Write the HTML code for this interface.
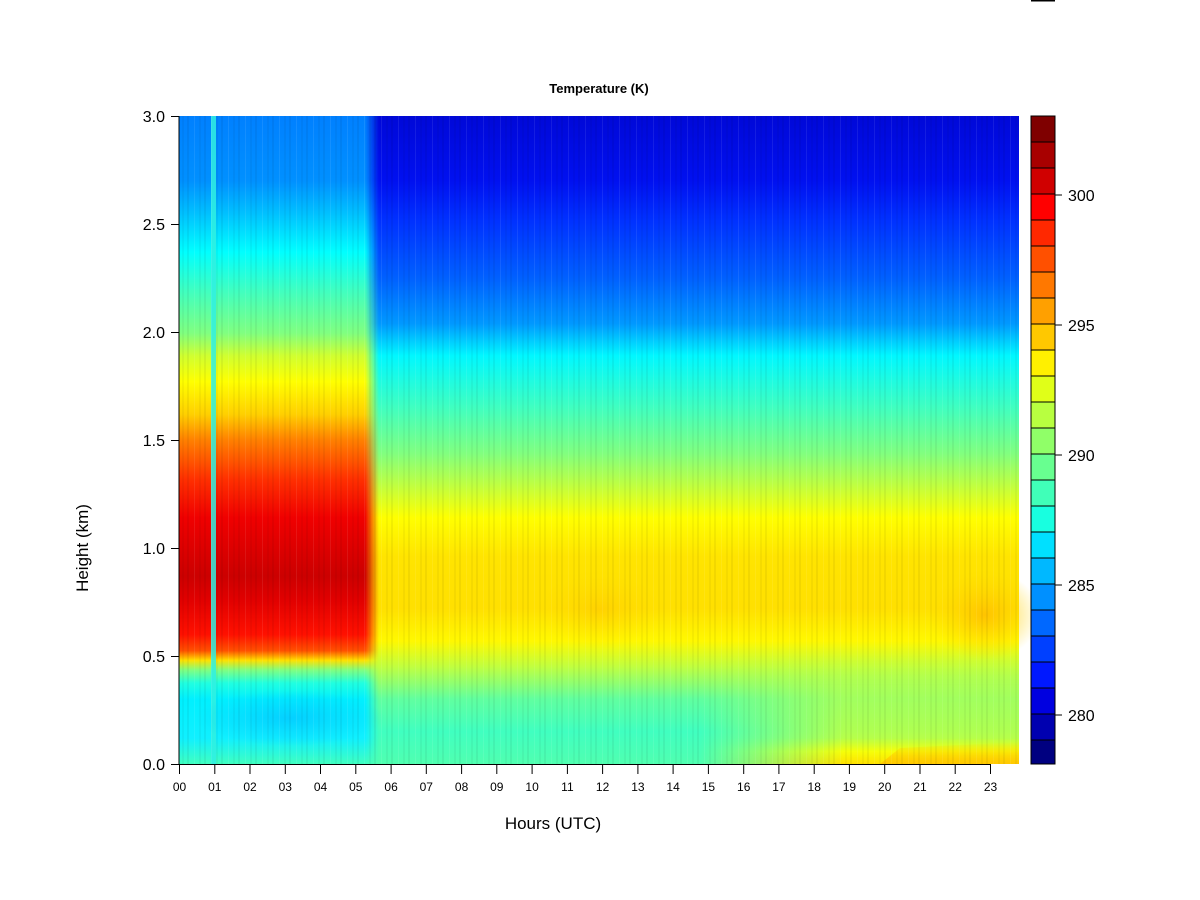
<!DOCTYPE html>
<html><head><meta charset="utf-8"><style>
html,body{margin:0;padding:0;background:#fff;}
svg{display:block;font-family:"Liberation Sans",Arial,sans-serif;}
</style></head><body>
<svg width="1200" height="900" viewBox="0 0 1200 900" xmlns="http://www.w3.org/2000/svg">
<defs>
<linearGradient id="gR" x1="0" y1="0" x2="0" y2="1">
<stop offset="0" stop-color="#0008D8"/>
<stop offset="0.10" stop-color="#0010F0"/>
<stop offset="0.16" stop-color="#0030FF"/>
<stop offset="0.25" stop-color="#0060FF"/>
<stop offset="0.32" stop-color="#0098FF"/>
<stop offset="0.37" stop-color="#00F8FF"/>
<stop offset="0.45" stop-color="#40FFC0"/>
<stop offset="0.52" stop-color="#80FF80"/>
<stop offset="0.57" stop-color="#C0FF40"/>
<stop offset="0.62" stop-color="#FFFF00"/>
<stop offset="0.68" stop-color="#FFE400"/>
<stop offset="0.76" stop-color="#FFE000"/>
<stop offset="0.81" stop-color="#FFF800"/>
<stop offset="0.85" stop-color="#C0FF40"/>
<stop offset="0.90" stop-color="#60FFA0"/>
<stop offset="0.95" stop-color="#40FFC0"/>
<stop offset="1" stop-color="#50FFB0"/>
</linearGradient>
<linearGradient id="gL" x1="0" y1="0" x2="0" y2="1">
<stop offset="0" stop-color="#0080FF"/>
<stop offset="0.10" stop-color="#0090FF"/>
<stop offset="0.15" stop-color="#00C0FF"/>
<stop offset="0.21" stop-color="#00FFFF"/>
<stop offset="0.27" stop-color="#40FFC0"/>
<stop offset="0.335" stop-color="#80FF80"/>
<stop offset="0.37" stop-color="#D0FF30"/>
<stop offset="0.41" stop-color="#FFFF00"/>
<stop offset="0.46" stop-color="#FFD000"/>
<stop offset="0.50" stop-color="#FF8000"/>
<stop offset="0.56" stop-color="#FF3000"/>
<stop offset="0.62" stop-color="#F00000"/>
<stop offset="0.68" stop-color="#D80000"/>
<stop offset="0.71" stop-color="#CC0000"/>
<stop offset="0.745" stop-color="#E00000"/>
<stop offset="0.80" stop-color="#FF1000"/>
<stop offset="0.825" stop-color="#FF5000"/>
<stop offset="0.84" stop-color="#FFE000"/>
<stop offset="0.855" stop-color="#80FF80"/>
<stop offset="0.875" stop-color="#20FFE0"/>
<stop offset="0.90" stop-color="#00F0FF"/>
<stop offset="0.96" stop-color="#10F0FF"/>
<stop offset="1" stop-color="#40FFC0"/>
</linearGradient>
<linearGradient id="mL" x1="0" y1="0" x2="1" y2="0">
<stop offset="0" stop-color="#fff"/>
<stop offset="0.93" stop-color="#fff"/>
<stop offset="1" stop-color="#000"/>
</linearGradient>
<mask id="mask1"><rect x="179" y="116" width="200" height="648" fill="url(#mL)"/></mask>
<linearGradient id="mB" x1="0" y1="0" x2="1" y2="0">
<stop offset="0" stop-color="#000"/>
<stop offset="0.45" stop-color="#fff"/>
<stop offset="1" stop-color="#fff"/>
</linearGradient>
<mask id="mask2"><rect x="700" y="660" width="319" height="104" fill="url(#mB)"/></mask>
<linearGradient id="gBot" x1="0" y1="0" x2="0" y2="1">
<stop offset="0" stop-color="#E0FF20" stop-opacity="0"/>
<stop offset="0.25" stop-color="#C8FF38" stop-opacity="0.55"/>
<stop offset="0.75" stop-color="#E8FF18" stop-opacity="0.7"/>
<stop offset="0.88" stop-color="#FFFF00" stop-opacity="0.95"/>
<stop offset="1" stop-color="#FFE000" stop-opacity="1"/>
</linearGradient>
<linearGradient id="gOrS" x1="0" y1="0" x2="0" y2="1">
<stop offset="0" stop-color="#FFD000" stop-opacity="0"/>
<stop offset="1" stop-color="#FFC800" stop-opacity="1"/>
</linearGradient>
<radialGradient id="gOr" cx="0.5" cy="0.5" r="0.5">
<stop offset="0" stop-color="#FFC000" stop-opacity="0.9"/>
<stop offset="1" stop-color="#FFD800" stop-opacity="0"/>
</radialGradient>
<radialGradient id="gBl" cx="0.5" cy="0.5" r="0.5">
<stop offset="0" stop-color="#00B0FF" stop-opacity="0.5"/>
<stop offset="1" stop-color="#00B0FF" stop-opacity="0"/>
</radialGradient>
<pattern id="stripes" x="0" y="0" width="17" height="10" patternUnits="userSpaceOnUse">
<rect x="0" y="0" width="2" height="10" fill="#000" opacity="0.05"/>
<rect x="7" y="0" width="1" height="10" fill="#fff" opacity="0.08"/>
<rect x="12" y="0" width="2" height="10" fill="#000" opacity="0.04"/>
</pattern>
</defs>
<rect x="179" y="116" width="840" height="648" fill="url(#gR)"/>
<rect x="179" y="116" width="200" height="648" fill="url(#gL)" mask="url(#mask1)"/>
<rect x="211" y="116" width="5" height="648" fill="#30F0E0" opacity="0.85"/>
<ellipse cx="290" cy="718" rx="95" ry="28" fill="url(#gBl)"/>
<rect x="700" y="660" width="319" height="104" fill="url(#gBot)" mask="url(#mask2)"/>
<polygon points="880,764 900,748 1019,742 1019,764" fill="url(#gOrS)"/>
<ellipse cx="985" cy="615" rx="55" ry="45" fill="url(#gOr)"/>
<ellipse cx="600" cy="610" rx="60" ry="40" fill="url(#gOr)" opacity="0.5"/>
<rect x="179" y="116" width="840" height="648" fill="url(#stripes)"/>
<!-- colorbar -->
<g stroke="#000" stroke-width="1">
<rect x="1031" y="116" width="24" height="26" fill="#7F0000"/>
<rect x="1031" y="142" width="24" height="26" fill="#A80000"/>
<rect x="1031" y="168" width="24" height="26" fill="#D00000"/>
<rect x="1031" y="194" width="24" height="26" fill="#FF0000"/>
<rect x="1031" y="220" width="24" height="26" fill="#FF2800"/>
<rect x="1031" y="246" width="24" height="26" fill="#FF5000"/>
<rect x="1031" y="272" width="24" height="26" fill="#FF7800"/>
<rect x="1031" y="298" width="24" height="26" fill="#FFA000"/>
<rect x="1031" y="324" width="24" height="26" fill="#FFC800"/>
<rect x="1031" y="350" width="24" height="26" fill="#FFF000"/>
<rect x="1031" y="376" width="24" height="26" fill="#E0FF18"/>
<rect x="1031" y="402" width="24" height="26" fill="#B8FF40"/>
<rect x="1031" y="428" width="24" height="26" fill="#90FF68"/>
<rect x="1031" y="454" width="24" height="26" fill="#68FF90"/>
<rect x="1031" y="480" width="24" height="26" fill="#40FFB8"/>
<rect x="1031" y="506" width="24" height="26" fill="#18FFE0"/>
<rect x="1031" y="532" width="24" height="26" fill="#00E0FF"/>
<rect x="1031" y="558" width="24" height="26" fill="#00B8FF"/>
<rect x="1031" y="584" width="24" height="26" fill="#0090FF"/>
<rect x="1031" y="610" width="24" height="26" fill="#0068FF"/>
<rect x="1031" y="636" width="24" height="26" fill="#0040FF"/>
<rect x="1031" y="662" width="24" height="26" fill="#0018FF"/>
<rect x="1031" y="688" width="24" height="26" fill="#0000E0"/>
<rect x="1031" y="714" width="24" height="26" fill="#0000B0"/>
<rect x="1031" y="740" width="24" height="24" fill="#000080"/>
<line x1="1055" y1="195" x2="1062" y2="195"/>
<line x1="1055" y1="325" x2="1062" y2="325"/>
<line x1="1055" y1="455" x2="1062" y2="455"/>
<line x1="1055" y1="585" x2="1062" y2="585"/>
<line x1="1055" y1="715" x2="1062" y2="715"/>
</g>
<g font-size="16" fill="#000">
<text x="1068" y="201">300</text>
<text x="1068" y="331">295</text>
<text x="1068" y="461">290</text>
<text x="1068" y="591">285</text>
<text x="1068" y="721">280</text>
</g>
<line x1="1031" y1="0.5" x2="1055" y2="0.5" stroke="#000" stroke-width="2"/>
<g stroke="#000" stroke-width="1">
<line x1="179" y1="116" x2="179" y2="764"/>
<line x1="171" y1="116.5" x2="179" y2="116.5"/>
<line x1="171" y1="224.5" x2="179" y2="224.5"/>
<line x1="171" y1="332.5" x2="179" y2="332.5"/>
<line x1="171" y1="440.5" x2="179" y2="440.5"/>
<line x1="171" y1="548.5" x2="179" y2="548.5"/>
<line x1="171" y1="656.5" x2="179" y2="656.5"/>
<line x1="171" y1="764.5" x2="179" y2="764.5"/>
<line x1="179" y1="764.5" x2="990" y2="764.5"/>
</g>
<g font-size="16" fill="#000" text-anchor="end">
<text x="165" y="122">3.0</text>
<text x="165" y="230">2.5</text>
<text x="165" y="338">2.0</text>
<text x="165" y="446">1.5</text>
<text x="165" y="554">1.0</text>
<text x="165" y="662">0.5</text>
<text x="165" y="770">0.0</text>
</g>
<g font-size="12" fill="#000" text-anchor="middle">
<line x1="179.5" y1="764" x2="179.5" y2="774" stroke="#000"/><text x="179.5" y="791">00</text>
<line x1="214.8" y1="764" x2="214.8" y2="774" stroke="#000"/><text x="214.8" y="791">01</text>
<line x1="250.0" y1="764" x2="250.0" y2="774" stroke="#000"/><text x="250.0" y="791">02</text>
<line x1="285.3" y1="764" x2="285.3" y2="774" stroke="#000"/><text x="285.3" y="791">03</text>
<line x1="320.5" y1="764" x2="320.5" y2="774" stroke="#000"/><text x="320.5" y="791">04</text>
<line x1="355.8" y1="764" x2="355.8" y2="774" stroke="#000"/><text x="355.8" y="791">05</text>
<line x1="391.1" y1="764" x2="391.1" y2="774" stroke="#000"/><text x="391.1" y="791">06</text>
<line x1="426.3" y1="764" x2="426.3" y2="774" stroke="#000"/><text x="426.3" y="791">07</text>
<line x1="461.6" y1="764" x2="461.6" y2="774" stroke="#000"/><text x="461.6" y="791">08</text>
<line x1="496.8" y1="764" x2="496.8" y2="774" stroke="#000"/><text x="496.8" y="791">09</text>
<line x1="532.1" y1="764" x2="532.1" y2="774" stroke="#000"/><text x="532.1" y="791">10</text>
<line x1="567.4" y1="764" x2="567.4" y2="774" stroke="#000"/><text x="567.4" y="791">11</text>
<line x1="602.6" y1="764" x2="602.6" y2="774" stroke="#000"/><text x="602.6" y="791">12</text>
<line x1="637.9" y1="764" x2="637.9" y2="774" stroke="#000"/><text x="637.9" y="791">13</text>
<line x1="673.1" y1="764" x2="673.1" y2="774" stroke="#000"/><text x="673.1" y="791">14</text>
<line x1="708.4" y1="764" x2="708.4" y2="774" stroke="#000"/><text x="708.4" y="791">15</text>
<line x1="743.7" y1="764" x2="743.7" y2="774" stroke="#000"/><text x="743.7" y="791">16</text>
<line x1="778.9" y1="764" x2="778.9" y2="774" stroke="#000"/><text x="778.9" y="791">17</text>
<line x1="814.2" y1="764" x2="814.2" y2="774" stroke="#000"/><text x="814.2" y="791">18</text>
<line x1="849.4" y1="764" x2="849.4" y2="774" stroke="#000"/><text x="849.4" y="791">19</text>
<line x1="884.7" y1="764" x2="884.7" y2="774" stroke="#000"/><text x="884.7" y="791">20</text>
<line x1="920.0" y1="764" x2="920.0" y2="774" stroke="#000"/><text x="920.0" y="791">21</text>
<line x1="955.2" y1="764" x2="955.2" y2="774" stroke="#000"/><text x="955.2" y="791">22</text>
<line x1="990.5" y1="764" x2="990.5" y2="774" stroke="#000"/><text x="990.5" y="791">23</text>
</g>
<text x="599" y="93" font-size="13" font-weight="bold" text-anchor="middle">Temperature (K)</text>
<text x="553" y="829" font-size="17" text-anchor="middle">Hours (UTC)</text>
<text transform="translate(88,548) rotate(-90)" font-size="17" text-anchor="middle">Height (km)</text>
</svg>
</body></html>
